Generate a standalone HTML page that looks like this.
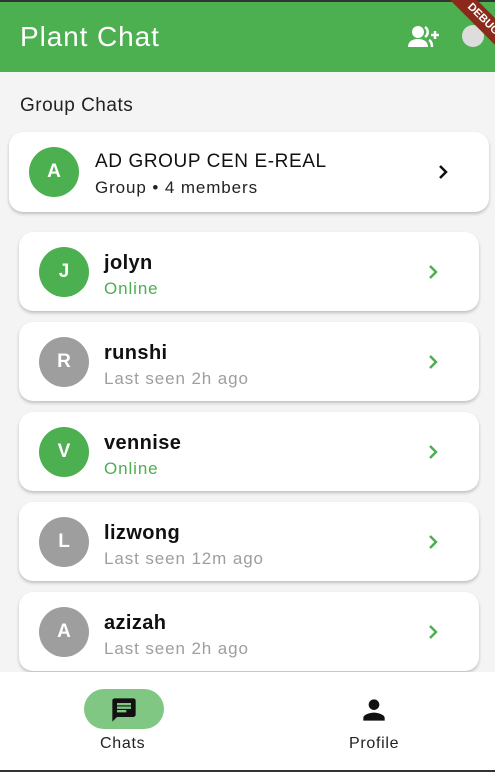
<!DOCTYPE html>
<html><head><style>
*{margin:0;padding:0;box-sizing:border-box}
body{width:495px;height:772px;background:#f4f4f4;font-family:"Liberation Sans",sans-serif;position:relative;overflow:hidden}
.top{position:absolute;left:0;top:0;width:495px;height:2px;background:#333}
.bar{position:absolute;left:0;top:2px;width:495px;height:70px;background:#4caf50}
.title{position:absolute;left:20px;top:21px;color:#fff;font-size:28px;letter-spacing:0.9px}
.h{position:absolute;left:20px;top:95px;font-size:19px;color:#222;letter-spacing:.5px}
.card{position:absolute;background:#fff;border-radius:14px;box-shadow:0 2px 3px rgba(0,0,0,.22)}
.av{position:absolute;width:50px;height:50px;border-radius:50%;color:#fff;font-weight:bold;font-size:19px;text-align:center;line-height:50px}
.g{background:#4caf50}.gr{background:#9e9e9e}
.nm{position:absolute;font-size:20px;color:#111;font-weight:bold;letter-spacing:.4px}
.st{position:absolute;font-size:17px;letter-spacing:.9px}
.chev{position:absolute}
.nav{position:absolute;left:0;top:672px;width:495px;height:98px;background:#fff}
.bot{position:absolute;left:0;top:770px;width:495px;height:2px;background:#333}
.pill{position:absolute;left:84px;top:689px;width:80px;height:40px;border-radius:20px;background:#81c784}
.lbl{position:absolute;top:735px;font-size:16px;color:#222;letter-spacing:.7px}
</style></head><body>
<div class="top"></div>
<div class="bar"></div>
<div class="title">Plant Chat</div>
<svg style="position:absolute;left:408px;top:25px" width="32" height="24" viewBox="0 0 32 24"><circle cx="10" cy="7" r="6" fill="#fff"/><path d="M0 22c0-6 5-8 10-8s10 2 10 8z" fill="#fff"/><path d="M17 2a6 6 0 0 1 0 10M21 15c2 1 3 3 3 7" stroke="#fff" stroke-width="2.5" fill="none"/><path d="M27 6v8M23 10h8" stroke="#fff" stroke-width="2.5"/></svg>
<div style="position:absolute;left:462px;top:25px;width:22px;height:22px;border-radius:50%;background:#ddd"></div>
<div style="position:absolute;left:428px;top:10px;width:110px;height:19px;background:#8b2a1b;transform:rotate(45deg);color:#fff;font-size:11px;font-weight:bold;text-align:center;line-height:19px">DEBUG</div>
<div class="h">Group Chats</div>

<div class="card" style="left:9px;top:132px;width:480px;height:80px"></div>
<div class="av g" style="left:29px;top:147px">A</div>
<div class="nm" style="left:95px;top:151px;font-weight:normal;letter-spacing:.6px;font-size:19px">AD GROUP CEN E-REAL</div>
<div class="st" style="left:95px;top:178px;color:#222">Group • 4 members</div>
<svg class="chev" style="left:437px;top:164px" width="14" height="16" viewBox="0 0 14 16"><path d="M3 2l6 6-6 6" stroke="#111" stroke-width="2.5" fill="none"/></svg>

<div class="card" style="left:19px;top:232px;width:460px;height:79px"></div>
<div class="av g" style="left:39px;top:247px">J</div>
<div class="nm" style="left:104px;top:252px">jolyn</div>
<div class="st" style="left:104px;top:279px;color:#4caf50">Online</div>
<svg class="chev" style="left:427px;top:264px" width="14" height="16" viewBox="0 0 14 16"><path d="M3 2l6 6-6 6" stroke="#4caf50" stroke-width="2.5" fill="none"/></svg>

<div class="card" style="left:19px;top:322px;width:460px;height:79px"></div>
<div class="av gr" style="left:39px;top:337px">R</div>
<div class="nm" style="left:104px;top:342px">runshi</div>
<div class="st" style="left:104px;top:369px;color:#9e9e9e">Last seen 2h ago</div>
<svg class="chev" style="left:427px;top:354px" width="14" height="16" viewBox="0 0 14 16"><path d="M3 2l6 6-6 6" stroke="#4caf50" stroke-width="2.5" fill="none"/></svg>

<div class="card" style="left:19px;top:412px;width:460px;height:79px"></div>
<div class="av g" style="left:39px;top:427px">V</div>
<div class="nm" style="left:104px;top:432px">vennise</div>
<div class="st" style="left:104px;top:459px;color:#4caf50">Online</div>
<svg class="chev" style="left:427px;top:444px" width="14" height="16" viewBox="0 0 14 16"><path d="M3 2l6 6-6 6" stroke="#4caf50" stroke-width="2.5" fill="none"/></svg>

<div class="card" style="left:19px;top:502px;width:460px;height:79px"></div>
<div class="av gr" style="left:39px;top:517px">L</div>
<div class="nm" style="left:104px;top:522px">lizwong</div>
<div class="st" style="left:104px;top:549px;color:#9e9e9e">Last seen 12m ago</div>
<svg class="chev" style="left:427px;top:534px" width="14" height="16" viewBox="0 0 14 16"><path d="M3 2l6 6-6 6" stroke="#4caf50" stroke-width="2.5" fill="none"/></svg>

<div class="card" style="left:19px;top:592px;width:460px;height:79px"></div>
<div class="av gr" style="left:39px;top:607px">A</div>
<div class="nm" style="left:104px;top:612px">azizah</div>
<div class="st" style="left:104px;top:639px;color:#9e9e9e">Last seen 2h ago</div>
<svg class="chev" style="left:427px;top:624px" width="14" height="16" viewBox="0 0 14 16"><path d="M3 2l6 6-6 6" stroke="#4caf50" stroke-width="2.5" fill="none"/></svg>

<div class="nav"></div>
<div class="pill"></div>
<svg style="position:absolute;left:110px;top:696px" width="28" height="28" viewBox="0 0 24 24"><path d="M20 2H4c-1.1 0-2 .9-2 2v18l4-4h14c1.1 0 2-.9 2-2V4c0-1.1-.9-2-2-2zM6 9h12v2H6V9zm8 5H6v-2h8v2zm4-6H6V6h12v2z" fill="#111"/></svg>
<svg style="position:absolute;left:358px;top:694px" width="32" height="32" viewBox="0 0 24 24"><path d="M12 12c2.2 0 4-1.8 4-4s-1.8-4-4-4-4 1.8-4 4 1.8 4 4 4zm0 2c-2.7 0-8 1.3-8 4v2h16v-2c0-2.7-5.3-4-8-4z" fill="#111"/></svg>
<div class="lbl" style="left:100px">Chats</div>
<div class="lbl" style="left:349px">Profile</div>
<div class="bot"></div>
</body></html>
